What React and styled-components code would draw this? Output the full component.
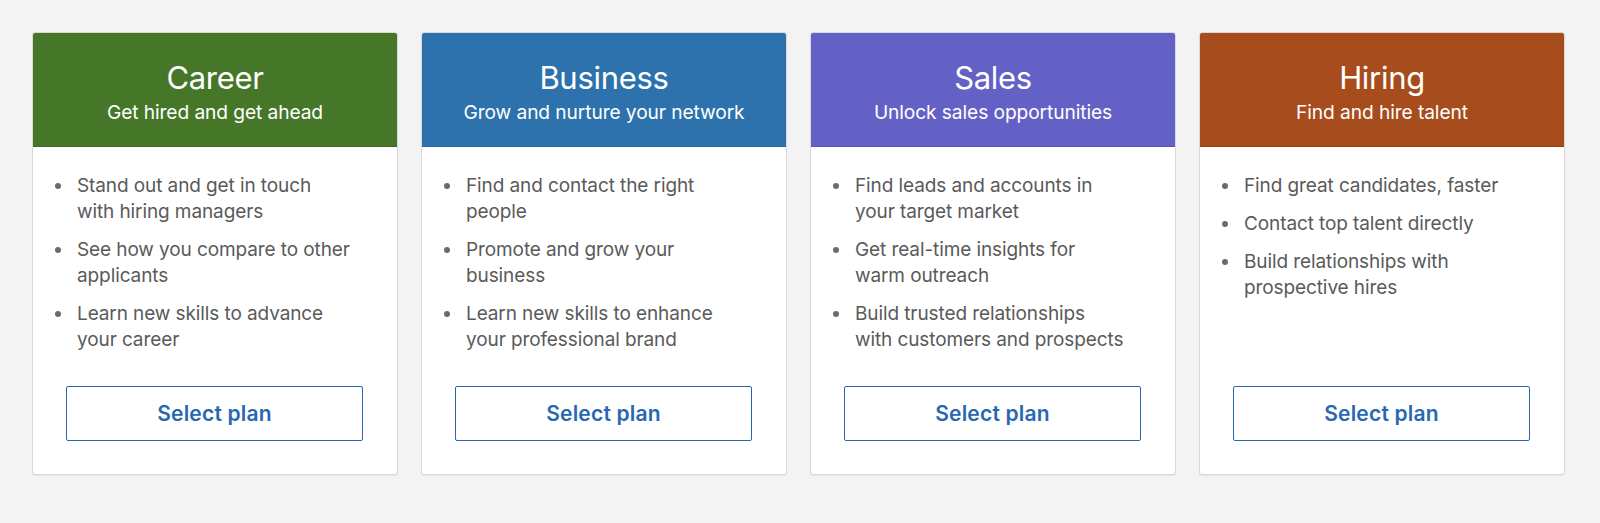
import React from "react";
import styled, { createGlobalStyle } from "styled-components";

const GlobalStyle = createGlobalStyle`
  html, body {
    margin: 0;
    padding: 0;
    background: #f3f3f3;
    font-family: Inter, "Liberation Sans", Arial, sans-serif;
  }
`;

const Page = styled.div`
  display: flex;
  align-items: stretch;
  gap: 23px;
  padding: 32px 0 0 32px;
  height: 523px;
  box-sizing: border-box;
`;

const Card = styled.section`
  width: 366px;
  height: 443px;
  box-sizing: border-box;
  display: flex;
  flex-direction: column;
  background: #ffffff;
  border: 1px solid #d9d9d9;
  border-radius: 3px;
  box-shadow: 0 1px 1px rgba(0, 0, 0, 0.06);
  overflow: hidden;
`;

const Header = styled.header`
  background: ${(p) => p.$color};
  border-bottom: 1px solid ${(p) => p.$edge};
  padding: 25px 12px 21px;
  text-align: center;
  color: #ffffff;
`;

const Title = styled.h2`
  margin: 0;
  font-size: 31px;
  line-height: 40px;
  font-weight: 400;
  letter-spacing: -0.3px;
`;

const Subtitle = styled.p`
  margin: 1px 0 0;
  font-size: 19.2px;
  line-height: 26px;
  font-weight: 400;
  letter-spacing: -0.1px;
`;

const List = styled.ul`
  list-style: none;
  margin: 0;
  padding: 26px 30px 0 44px;
  display: flex;
  flex-direction: column;
  gap: 12px;
`;

const Item = styled.li`
  position: relative;
  font-size: 19px;
  line-height: 26px;
  letter-spacing: -0.1px;
  color: #5a5a5a;

  &::before {
    content: "";
    position: absolute;
    left: -22px;
    top: 10px;
    width: 6px;
    height: 6px;
    border-radius: 50%;
    background: #6b6b6b;
  }
`;

const Line = styled.span`
  display: block;
  white-space: nowrap;
`;

const Footer = styled.div`
  margin-top: auto;
  padding: 0 34px 33px 33px;
`;

const SelectButton = styled.button`
  width: 100%;
  height: 55px;
  box-sizing: border-box;
  background: #ffffff;
  border: 1px solid #2a66b0;
  border-radius: 2px;
  color: #2867b2;
  font-family: Inter, "Liberation Sans", Arial, sans-serif;
  font-size: 21px;
  font-weight: 600;
  letter-spacing: 0.2px;
  cursor: pointer;
`;

const plans = [
  {
    title: "Career",
    subtitle: "Get hired and get ahead",
    color: "#467729",
    edge: "#3c6a22",
    items: [
      ["Stand out and get in touch", "with hiring managers"],
      ["See how you compare to other", "applicants"],
      ["Learn new skills to advance", "your career"],
    ],
  },
  {
    title: "Business",
    subtitle: "Grow and nurture your network",
    color: "#2d72ac",
    edge: "#26659b",
    items: [
      ["Find and contact the right", "people"],
      ["Promote and grow your", "business"],
      ["Learn new skills to enhance", "your professional brand"],
    ],
  },
  {
    title: "Sales",
    subtitle: "Unlock sales opportunities",
    color: "#6461c6",
    edge: "#5855b5",
    items: [
      ["Find leads and accounts in", "your target market"],
      ["Get real-time insights for", "warm outreach"],
      ["Build trusted relationships", "with customers and prospects"],
    ],
  },
  {
    title: "Hiring",
    subtitle: "Find and hire talent",
    color: "#a74c1c",
    edge: "#954216",
    items: [
      ["Find great candidates, faster"],
      ["Contact top talent directly"],
      ["Build relationships with", "prospective hires"],
    ],
  },
];

export default function App() {
  return (
    <>
      <GlobalStyle />
      <Page>
        {plans.map((plan) => (
          <Card key={plan.title}>
            <Header $color={plan.color} $edge={plan.edge}>
              <Title>{plan.title}</Title>
              <Subtitle>{plan.subtitle}</Subtitle>
            </Header>
            <List>
              {plan.items.map((lines) => (
                <Item key={lines.join(" ")}>
                  {lines.map((line) => (
                    <Line key={line}>{line}</Line>
                  ))}
                </Item>
              ))}
            </List>
            <Footer>
              <SelectButton>Select plan</SelectButton>
            </Footer>
          </Card>
        ))}
      </Page>
    </>
  );
}
